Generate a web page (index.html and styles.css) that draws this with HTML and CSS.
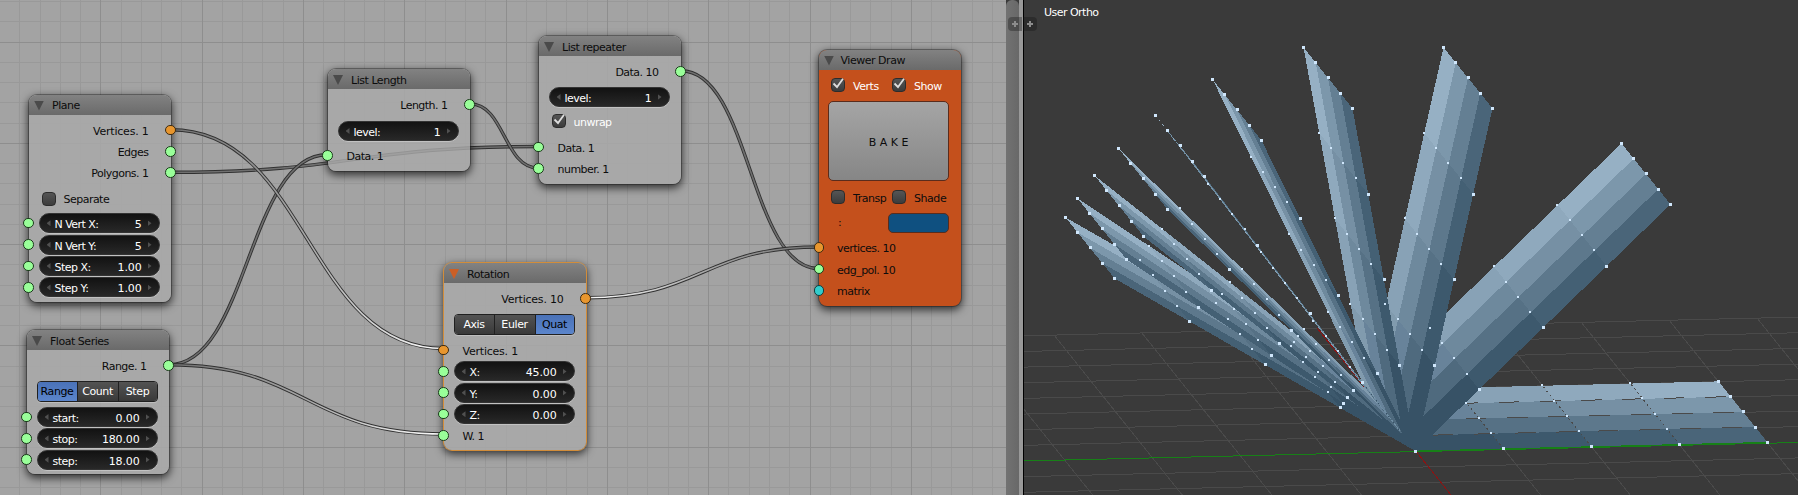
FILE: index.html
```html
<!DOCTYPE html>
<html lang="en">
<head>
<meta charset="utf-8">
<title>Node editor</title>
<link rel="stylesheet" href="styles.css">
</head>
<body>
<main class="screen">
  <section class="editor">
    <svg class="layer" id="grid" width="1006" height="495"></svg>
    <svg class="layer" id="wires" width="1006" height="495">
      <defs>
        <linearGradient id="toSelected" gradientUnits="userSpaceOnUse" x1="171" y1="0" x2="443" y2="0"><stop offset="0" stop-color="#6f6f6f"/><stop offset=".5" stop-color="#a8a8a8"/><stop offset="1" stop-color="#fff"/></linearGradient>
        <linearGradient id="fromSelected" gradientUnits="userSpaceOnUse" x1="586" y1="0" x2="819" y2="0"><stop offset="0" stop-color="#fff"/><stop offset=".5" stop-color="#a8a8a8"/><stop offset="1" stop-color="#6f6f6f"/></linearGradient>
      </defs>
    </svg>

    <article class="node plane">
      <header><i class="fold"></i>Plane</header>
      <div class="row out wide"><b class="socket right orange"></b>Vertices. 1</div>
      <div class="row out"><b class="socket right"></b>Edges</div>
      <div class="row out"><b class="socket right"></b>Polygons. 1</div>
      <div class="row checks"><i class="box"></i><span class="cl">Separate</span></div>
      <div class="row"><b class="socket left"></b><div class="field"><span>N Vert X:</span><em>5</em></div></div>
      <div class="row"><b class="socket left"></b><div class="field"><span>N Vert Y:</span><em>5</em></div></div>
      <div class="row"><b class="socket left"></b><div class="field"><span>Step X:</span><em>1.00</em></div></div>
      <div class="row"><b class="socket left"></b><div class="field"><span>Step Y:</span><em>1.00</em></div></div>
    </article>

    <article class="node series">
      <header><i class="fold"></i>Float Series</header>
      <div class="row out"><b class="socket right"></b>Range. 1</div>
      <div class="tabs"><span class="on">Range</span><span>Count</span><span>Step</span></div>
      <div class="row"><b class="socket left"></b><div class="field"><span>start:</span><em>0.00</em></div></div>
      <div class="row"><b class="socket left"></b><div class="field"><span>stop:</span><em>180.00</em></div></div>
      <div class="row"><b class="socket left"></b><div class="field"><span>step:</span><em>18.00</em></div></div>
    </article>

    <article class="node length">
      <header><i class="fold"></i>List Length</header>
      <div class="row out"><b class="socket right"></b>Length. 1</div>
      <div class="row level"><div class="field"><span>level:</span><em>1</em></div></div>
      <div class="row in"><b class="socket left"></b>Data. 1</div>
    </article>

    <article class="node repeater">
      <header><i class="fold"></i>List repeater</header>
      <div class="row out"><b class="socket right"></b>Data. 10</div>
      <div class="row level"><div class="field"><span>level:</span><em>1</em></div></div>
      <div class="row checks"><i class="box"><svg viewBox="0 0 14 14"><path d="M2.5 5.5 6 9 12 .8"/></svg></i><span class="cl lit">unwrap</span></div>
      <div class="row in"><b class="socket left"></b>Data. 1</div>
      <div class="row in"><b class="socket left"></b>number. 1</div>
    </article>

    <article class="node rotation">
      <header><i class="fold"></i>Rotation</header>
      <div class="row out wide"><b class="socket right orange"></b>Vertices. 10</div>
      <div class="tabs"><span>Axis</span><span>Euler</span><span class="on">Quat</span></div>
      <div class="row in wide"><b class="socket left orange"></b>Vertices. 1</div>
      <div class="row"><b class="socket left"></b><div class="field"><span>X:</span><em>45.00</em></div></div>
      <div class="row"><b class="socket left"></b><div class="field"><span>Y:</span><em>0.00</em></div></div>
      <div class="row"><b class="socket left"></b><div class="field"><span>Z:</span><em>0.00</em></div></div>
      <div class="row in"><b class="socket left"></b>W. 1</div>
    </article>

    <article class="node viewer">
      <header><i class="fold"></i>Viewer Draw</header>
      <div class="row pair"><div><i class="box"><svg viewBox="0 0 14 14"><path d="M2.5 5.5 6 9 12 .8"/></svg></i><span class="cl lit">Verts</span></div><div><i class="box"><svg viewBox="0 0 14 14"><path d="M2.5 5.5 6 9 12 .8"/></svg></i><span class="cl lit">Show</span></div></div>
      <div class="bake">B A K E</div>
      <div class="row pair"><div><i class="box"></i><span class="cl">Transp</span></div><div><i class="box"></i><span class="cl">Shade</span></div></div>
      <div class="row color"><span>:</span><i class="swatch"></i></div>
      <div class="row in"><b class="socket left orange"></b>vertices. 10</div>
      <div class="row in"><b class="socket left"></b>edg_pol. 10</div>
      <div class="row in"><b class="socket left cyan"></b>matrix</div>
    </article>
  </section>

  <div class="scrollbar"></div>
  <div class="edge"></div>

  <section class="viewport">
    <svg class="layer" id="scene" width="774" height="495" viewBox="1024 0 774 495"></svg>
    <span class="view-name">User Ortho</span>
  </section>

  <i class="plus one"></i>
  <i class="plus two"></i>
</main>
<script src="script.js"></script>
</body>
</html>
```
FILE: styles.css
```css
* { box-sizing: border-box; }
body { margin: 0; }
.screen {
  position: relative;
  display: flex;
  width: 1798px;
  height: 495px;
  overflow: hidden;
  background: #3a3a3a;
  font: 11px/21px "DejaVu Sans", sans-serif;
  letter-spacing: -0.52px;
  color: #0c0c0c;
}
.editor { position: relative; width: 1006px; background: #a3a3a3; }
.layer { position: absolute; inset: 0; display: block; }
.scrollbar { width: 13px; background: linear-gradient(90deg, #727272, #686868); border-radius: 6px 6px 0 0; }
.edge { width: 5px; background: linear-gradient(90deg, #999 0 4px, #000 4px); }
.viewport { position: relative; flex: 1; background: #3a3a3a; }
.view-name { position: absolute; left: 20px; top: 1.5px; color: #fff; }

/* nodes on the canvas */
.node {
  position: absolute;
  width: 142px;
  border-radius: 8px;
  background: rgba(170, 170, 170, .82);
  box-shadow: 0 0 0 1px rgba(20, 20, 20, .35), 0 3px 9px 1px rgba(0, 0, 0, .7);
}
.node header {
  display: flex;
  align-items: center;
  height: 20px;
  padding: 2px 0 0 5.5px;
  margin-bottom: 5px;
  border-radius: 8px 8px 0 0;
  background: linear-gradient(#828282, #6a6a6a);
  letter-spacing: -.47px;
}
.fold {
  width: 10px;
  height: 10px;
  margin-right: 8px;
  background: #4a4a4a;
  clip-path: polygon(0 0, 100% 0, 50% 100%);
}
.row { position: relative; display: flex; align-items: center; height: 21.4px; padding: 0 11px 0 10px; }
.out { justify-content: flex-end; padding: 2px 22px 0 0; }
.in { padding: 2px 0 0 19px; }
.wide { letter-spacing: -.22px; }
.socket {
  position: absolute;
  top: 5.2px;
  width: 10.6px;
  height: 10.6px;
  border-radius: 50%;
  border: 1px solid #1c3a1c;
  background: #99ff99;
}
.left { left: -5.3px; }
.right { right: -5px; }
.orange { background: #e8962e; border-color: #3c2a12; }
.cyan { background: #33cccc; border-color: #123c3c; }

.field {
  position: relative;
  display: flex;
  flex: 1;
  justify-content: space-between;
  height: 20px;
  padding: 0 17px 0 15px;
  border-radius: 10px;
  border: 1px solid #333;
  background: linear-gradient(#121212, #282828);
  box-shadow: 0 1px 0 rgba(255, 255, 255, .3);
  color: #fff;
}
.field em { font-style: normal; letter-spacing: -.15px; }
.field::before, .field::after {
  content: "";
  position: absolute;
  top: 6px;
  width: 4px;
  height: 6px;
  background: #505050;
}
.field::before { left: 7px; clip-path: polygon(100% 0, 100% 100%, 0 50%); }
.field::after { right: 7px; clip-path: polygon(0 0, 100% 50%, 0 100%); }

.tabs {
  display: grid;
  grid-template-columns: 39px 41px 1fr;
  height: 21px;
  margin: 5px 11px 4px 10px;
  border: 1px solid #202020;
  border-radius: 4px;
  overflow: hidden;
  box-shadow: 0 1px 0 rgba(255, 255, 255, .25);
  color: #fff;
  text-align: center;
}
.tabs span { background: linear-gradient(#535353, #383838); line-height: 20px; letter-spacing: -.4px; }
.tabs span + span { border-left: 1px solid #202020; }
.tabs .on { background: linear-gradient(#4a72b8, #5c86cc); color: #000; }

.box {
  flex: none;
  width: 14px;
  height: 14px;
  border: 1px solid #2c2c2c;
  border-radius: 4px;
  background: linear-gradient(#555, #3c3c3c);
}
.box svg { display: block; width: 14px; height: 14px; margin: -1px; overflow: visible; }
.box path { fill: none; stroke: #ddd; stroke-width: 1.8; }
.cl { margin-left: 8px; padding-top: 2px; }
.lit { color: #fff; }
.checks { padding-left: 13px; }

.plane { left: 28.5px; top: 94.5px; height: 207.5px; }
.plane .checks { margin: 4.5px 0 3px; }
.series { left: 26.5px; top: 330px; height: 143.5px; }
.length { left: 327.5px; top: 69px; height: 101.5px; }
.length .level { margin: 5px 0 3px; }
.repeater { left: 538.5px; top: 36px; height: 147.5px; }
.repeater .level { margin: 4px 0 3px; }
.repeater .checks { margin: 0 0 4.5px; }
.rotation { left: 443.5px; top: 263px; height: 186.5px; box-shadow: 0 0 0 1px #d28d3a, 0 3px 9px 1px rgba(0, 0, 0, .7); }
.rotation .fold { background: #cb5f26; }
.viewer { left: 819px; top: 49.5px; height: 256px; background: #c4501c; }
.viewer header { padding-left: 5px; }
.viewer .fold { margin-right: 6.5px; }
.viewer .in { padding-left: 18px; }

.pair { padding: 0 0 0 12px; }
.pair > div { display: flex; align-items: center; width: 61px; letter-spacing: -.45px; }
.bake {
  height: 80.5px;
  margin: 5px 12px 5px 9px;
  border: 1px solid #5a2c1c;
  border-radius: 5px;
  background: linear-gradient(#a5a5a5, #868686);
  text-align: center;
  line-height: 81px;
  letter-spacing: 0;
}
.color { justify-content: space-between; margin: 4.3px 0 3.5px; padding: 0 12px 0 19px; }
.swatch { width: 61px; height: 20px; border: 1px solid #5a2c1c; border-radius: 5px; background: #0f5080; }

.plus { position: absolute; top: 17px; width: 14px; height: 14px; background: rgba(20, 20, 20, .35); }
.plus::before, .plus::after { content: ""; position: absolute; background: #8c8c8c; }
.plus::before { left: 4px; top: 6px; width: 6px; height: 2px; }
.plus::after { left: 6px; top: 4px; width: 2px; height: 6px; }
.one { left: 1008px; border-radius: 4px 0 0 4px; }
.two { left: 1023px; border-radius: 0 4px 4px 0; }
```
FILE: script.js
```
const NS = 'http://www.w3.org/2000/svg';
function add(parent, tag, attrs) {
  const el = document.createElementNS(NS, tag);
  for (const k in attrs) el.setAttribute(k, attrs[k]);
  parent.appendChild(el);
}

// Editor grid: 20.26px cells, every fifth line stronger
const grid = document.getElementById('grid');
for (const major of [false, true]) {
  for (let n = 0; n < 60; n++) {
    if ((n % 5 === 0) !== major) continue;
    const fill = major ? '#8e8e8e' : '#999';
    add(grid, 'rect', { x: Math.round(-0.9 + n * 20.26), y: 0, width: 1, height: 495, fill });
    add(grid, 'rect', { x: 0, y: Math.round(-59.8 + n * 20.26), width: 1006, height: 1, fill });
  }
}

// Wires: symmetric S-curves
const wires = document.getElementById('wires');
[
  [171, 172.3, 538, 146.5, '#6f6f6f'],
  [169, 364.7, 327, 154.8, '#6f6f6f'],
  [171, 129.7, 443.5, 348.5, 'url(#toSelected)'],
  [169, 364.7, 443.5, 434, 'url(#toSelected)'],
  [470.5, 104, 538, 168, '#6f6f6f'],
  [681, 70.7, 819, 268.7, '#6f6f6f'],
  [586, 297.7, 819, 247, 'url(#fromSelected)']
].forEach(([x1, y1, x2, y2, color]) => {
  const m = (x1 + x2) / 2;
  const d = `M${x1} ${y1}C${m} ${y1} ${m} ${y2} ${x2} ${y2}`;
  add(wires, 'path', { d, fill: 'none', stroke: '#303030', 'stroke-width': 3.4 });
  add(wires, 'path', { d, fill: 'none', stroke: color, 'stroke-width': 1.6 });
});

// 3D view
const scene = document.getElementById('scene');
const line = (x1, y1, x2, y2, stroke, extra) =>
  add(scene, 'line', Object.assign({ x1, y1, x2, y2, stroke, 'shape-rendering': 'crispEdges' }, extra));
const O = [1415.5, 451.1];
const S = [-12.25, -15.25];

for (let n = -2; n <= 8; n++) {
  if (n) line(1024, 461 - n * 15.65, 1798, 442.3 - n * 15.65, '#4a4a4a');
}
for (let n = -4; n <= 6; n++) {
  if (n) line(1317.5 + n * 87.9, 328.5 - n * 2.1, 1317.5 + n * 87.9 + 160, 328.5 - n * 2.1 + 199.5, '#4a4a4a');
}
line(1024, 461, 1798, 442.5, '#178017');
line(1317.5, 328.5, 1451, 495, '#8a1414');

const fan = [
  [352, -8.7], [255, -246.7], [77, -342.7], [-63, -342.7], [-154, -310.7],
  [-211, -274.7], [-248, -241.7], [-272, -214.7], [-289, -191.7], [-301, -172.7]
];
const shades = [
  ['#375266', '#4f6a7e', '#68839a', '#819bae'],
  ['#3d596d', '#567185', '#6e899d', '#88a2b6'],
  ['#446074', '#5d788c', '#7690a4', '#8fa9bd'],
  ['#4a6579', '#647f93', '#7c97ab', '#96b0c4']
];
const at = (v, i, j) => [O[0] + S[0] * i + v[0] * j / 4, O[1] + S[1] * i + v[1] * j / 4];

for (const k of [9, 8, 7, 6, 0, 1, 2, 3, 4, 5]) {
  const v = fan[k];
  for (let j = 0; j < 4; j++) for (let i = 0; i < 4; i++) {
    add(scene, 'polygon', {
      points: [at(v, i, j), at(v, i + 1, j), at(v, i + 1, j + 1), at(v, i, j + 1)].join(' '),
      fill: shades[j][i], 'shape-rendering': 'crispEdges'
    });
  }
  if (k === 5) line(...at(v, 4, 3.8), ...at(v, 0, .3), '#6f8ea3', { 'stroke-dasharray': '3 1' });
  if (k === 0) {
    // grid showing through the flat sheet
    for (let i = 1; i < 4; i++) {
      line(...at(v, i, 0), ...at(v, i, 4), '#4a4a4a', { 'stroke-dasharray': '20.7 20.6', 'stroke-dashoffset': [0, 12, 8, 4][i] });
      line(...at(v, 0, i), ...at(v, 4, i), '#4a4a4a', { 'stroke-dasharray': '2 3' });
    }
    line(...at(v, 0, 0), ...at(v, 0, 4), '#178017');
  }
}
fan.forEach((v, k) => {
  for (let j = 0; j <= 4; j++) for (let i = 0; i <= 4; i++) {
    if (j === 0 && (i || k)) continue;
    if (k === 0 && j === 1 && i === 4) continue;
    const rim = i === 0 || j === 4;
    const [x, y] = at(v, i, j);
    const size = rim ? 3 : 2;
    add(scene, 'rect', { x: Math.floor(x) - 1, y: Math.floor(y) - 1, width: size, height: size, fill: '#cfe6fb' });
  }
});
```
